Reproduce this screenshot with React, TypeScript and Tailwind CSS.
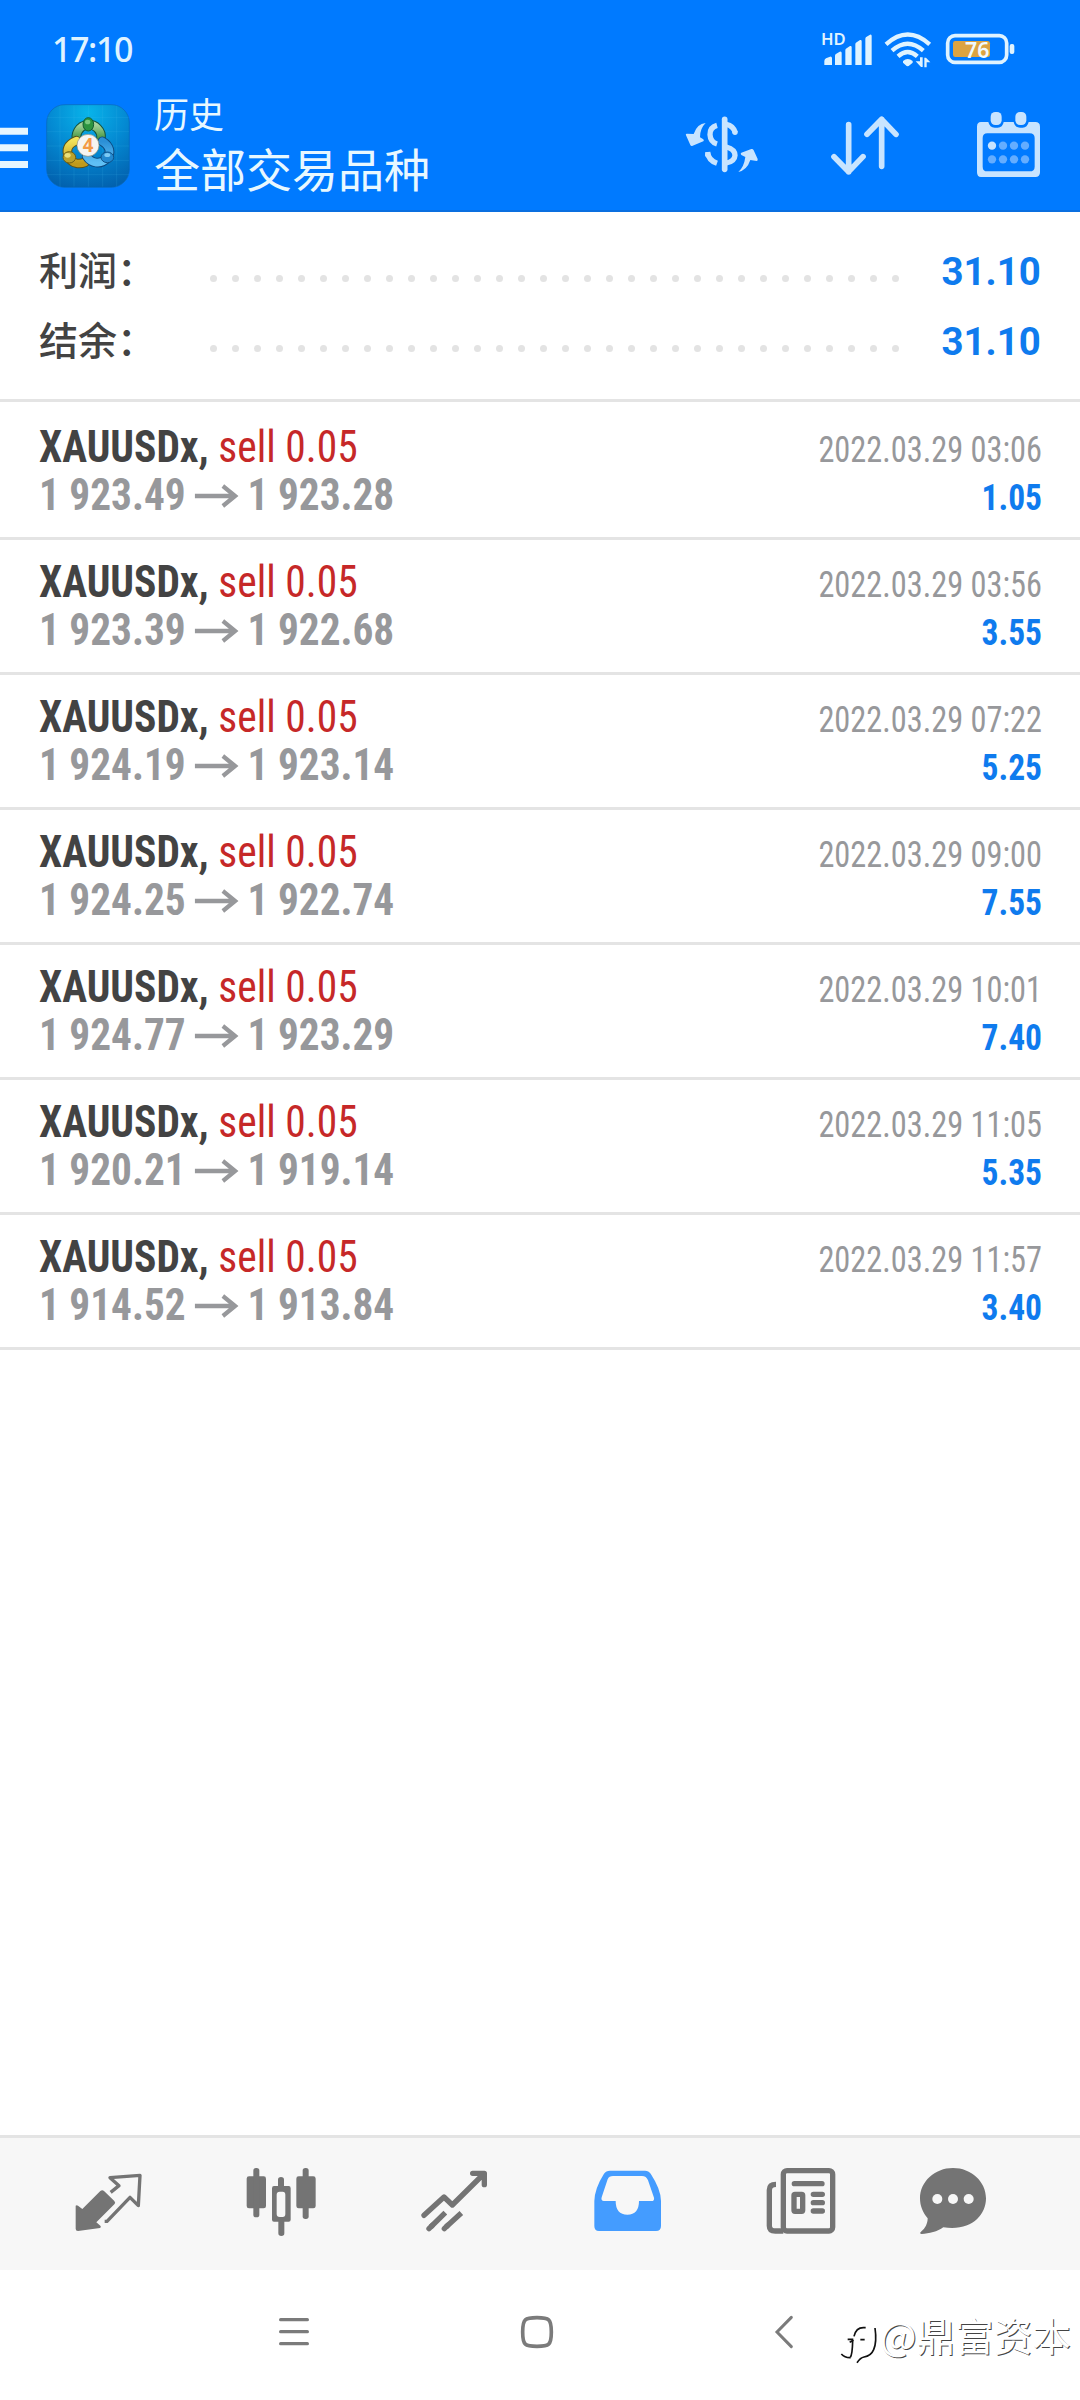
const DEALS = [
  { open: '1 923.49', close: '1 923.28', time: '2022.03.29 03:06', profit: '1.05' },
  { open: '1 923.39', close: '1 922.68', time: '2022.03.29 03:56', profit: '3.55' },
  { open: '1 924.19', close: '1 923.14', time: '2022.03.29 07:22', profit: '5.25' },
  { open: '1 924.25', close: '1 922.74', time: '2022.03.29 09:00', profit: '7.55' },
  { open: '1 924.77', close: '1 923.29', time: '2022.03.29 10:01', profit: '7.40' },
  { open: '1 920.21', close: '1 919.14', time: '2022.03.29 11:05', profit: '5.35' },
  { open: '1 914.52', close: '1 913.84', time: '2022.03.29 11:57', profit: '3.40' },
];

const DOTS = Array.from({ length: 32 }, (_, i) => i);

function StatusBar() {
  return (
    <div className="flex h-[97px] items-start pl-[52px] pr-[64px]">
      <span className="mt-[25px] font-['Noto_Sans'] text-[34px] leading-[48px] font-medium tracking-[-1.4px] text-[#dff3ff]">17:10</span>
      <svg className="mt-[24px] ml-auto" width="54" height="43" viewBox="480 72 162 129" fill="#dff3ff">
        <text x="483" y="136" fontFamily="Noto Sans" fontSize="50" fontWeight="600" textLength="74">HD</text>
        <path d="M493 195v-12q0-5 5-8l12-5q6-1 6 5v20zM525 195v-28q0-4 4-6l10-6q6-2 6 4v36zM556 195v-44q0-4 4-6l10-7q5-1 5 4v53zM586 195v-62q0-4 4-6l10-7q5-1 5 4v71zM616 195v-79q0-4 4-6l10-6q5-2 5 4v87z" />
      </svg>
      <svg className="mt-[30px] ml-[9px]" width="50" height="39" viewBox="669 90 150 117" fill="none" stroke="#dff3ff">
        <path strokeWidth="13" d="M678 133q65-59 131 0M696 152q47-42 94 0M714 169q29-26 58 0" />
        <path fill="#dff3ff" stroke="none" d="M729 183q14-12 29 0v5l-12 10q-3 1-6 0l-11-10zM780 172h8v29h-5l-16-17h13zM793 202v-29h5l13 14h-11v15z" />
      </svg>
      <svg className="mt-[32px] ml-[12px]" width="71" height="34" viewBox="855 96 213 102">
        <rect x="863" y="107" width="177" height="80" rx="22" fill="none" stroke="#dff3ff" strokeWidth="11" />
        <rect x="879" y="123" width="111" height="48" rx="7" fill="#dca341" />
        <rect x="1049" y="132" width="14" height="30" rx="6" fill="#dff3ff" />
        <text x="915" y="173" fontFamily="Noto Sans" fontSize="66" fontWeight="600" fill="#f0faff" textLength="73" lengthAdjust="spacingAndGlyphs">76</text>
      </svg>
    </div>
  );
}

function AppLogo() {
  return (
    <svg className="mt-[7px] ml-[17px]" width="84" height="84" viewBox="138 312 252 252">
      <defs>
        <radialGradient id="tile" cx="50%" cy="10%" r="95%">
          <stop offset="0" stopColor="#08b4ea" />
          <stop offset=".5" stopColor="#0489d2" />
          <stop offset="1" stopColor="#0260ad" />
        </radialGradient>
        <linearGradient id="green" x1="0" y1="0" x2="0" y2="1">
          <stop offset="0" stopColor="#a5d39a" />
          <stop offset="1" stopColor="#2f8a2f" />
        </linearGradient>
        <linearGradient id="yellow" x1="0" y1="0" x2="0" y2="1">
          <stop offset="0" stopColor="#f2e25a" />
          <stop offset="1" stopColor="#c09a1c" />
        </linearGradient>
        <linearGradient id="blue" x1="0" y1="0" x2="0" y2="1">
          <stop offset="0" stopColor="#2b8fd6" />
          <stop offset="1" stopColor="#5fc0f5" />
        </linearGradient>
      </defs>
      <rect x="140" y="314" width="248" height="248" rx="54" fill="url(#tile)" stroke="#0a68b8" strokeWidth="2" />
      <path d="M180 316v244M222 316v244M265 316v244M308 316v244M350 316v244M141 352h246M141 395h246M141 438h246M141 481h246M141 524h246" stroke="#4fc0f0" strokeOpacity=".22" strokeWidth="2" />
      <g fill="none" strokeLinecap="round">
        <path d="M232 425A37 37 0 1 1 303 416" stroke="#15533f" strokeWidth="29" />
        <path d="M232 425A37 37 0 1 1 303 416" stroke="url(#green)" strokeWidth="23" />
        <path d="M229 422C203 433 196 450 207 473C218 491 238 494 255 487" stroke="#59521c" strokeWidth="29" />
        <path d="M229 422C203 433 196 450 207 473C218 491 238 494 255 487" stroke="url(#yellow)" strokeWidth="23" />
        <path d="M307 424C331 438 334 460 321 475C302 496 274 490 260 469" stroke="#0d4a80" strokeWidth="29" />
        <path d="M307 424C331 438 334 460 321 475C302 496 274 490 260 469" stroke="url(#blue)" strokeWidth="23" />
      </g>
      <ellipse cx="265" cy="373" rx="16" ry="20" fill="#2c9440" stroke="#135b30" strokeWidth="3" />
      <ellipse cx="263" cy="366" rx="8" ry="7" fill="#79c77f" />
      <ellipse cx="208" cy="472" rx="19" ry="17" fill="#baa12c" stroke="#6c5e15" strokeWidth="3" />
      <ellipse cx="203" cy="466" rx="9" ry="7" fill="#e9df7a" />
      <ellipse cx="322" cy="472" rx="19" ry="16" fill="#2389d0" stroke="#0e528a" strokeWidth="3" />
      <ellipse cx="322" cy="465" rx="9" ry="6" fill="#7dcaf4" />
      <circle cx="264" cy="436" r="33" fill="#f5f4f2" stroke="#8d8c78" strokeWidth="2" />
      <text x="264" y="457" textAnchor="middle" fontFamily="Open Sans" fontSize="56" fontWeight="700" fill="#f39a45">4</text>
    </svg>
  );
}

function Toolbar() {
  return (
    <div className="flex h-[112px] items-start pr-[39px]">
      <svg className="mt-[29px]" width="29" height="44" viewBox="0 378 87 132" fill="#e6f6ff">
        <path d="M0 383h84v21H0zM0 433h84v21H0zM0 483h84v21H0z" />
      </svg>
      <AppLogo />
      <div className="ml-[24px] font-['Noto_Sans_CJK_SC',sans-serif] text-[#e8f8ff]">
        <p className="-mt-[5px] text-[35px] leading-[42px]">历史</p>
        <p className="mt-[6px] text-[46px] leading-[54px]">全部交易品种</p>
      </div>
      <svg className="mt-[18px] ml-auto" width="76" height="58" viewBox="72 345 228 174" fill="none" stroke="#c8e4ff">
        <path strokeWidth="17" strokeLinecap="round" d="M194 358v150" />
        <path strokeWidth="16" d="M171 376Q149 382 150 404Q151 426 171 432M143 456Q145 481 171 490" />
        <path strokeWidth="16" d="M199 373Q220 377 226 398M199 441Q225 448 225 466Q224 484 199 489" />
        <circle cx="225" cy="397" r="8" fill="#c8e4ff" stroke="none" />
        <circle cx="143" cy="464" r="8" fill="#c8e4ff" stroke="none" />
        <path fill="#c8e4ff" stroke="none" d="M137 369Q111 371 101 402L80 401Q76 401 78 406L91 435Q93 439 98 437L130 424Q133 422 130 418L120 412Q120 385 137 369ZM235 516Q261 510 271 480L290 483Q294 483 293 477L281 451Q279 446 274 447L244 458Q240 460 244 465L256 471Q252 501 235 516Z" />
      </svg>
      <svg className="mt-[18px] ml-[70px]" width="70" height="61" viewBox="510 345 210 183" fill="none" stroke="#c8e4ff" strokeWidth="17" strokeLinecap="round" strokeLinejoin="round">
        <path d="M566 374v141M522 470l44 45 43-45M665 499V358M621 403l44-45 43 45" />
      </svg>
      <svg className="mt-[14px] ml-[76px]" width="65" height="67" viewBox="948 333 195 201">
        <path fill="#c8e4ff" fillRule="evenodd" d="M963 366h22q4 17 19 17h9q15 0 18-17h30q4 17 19 17h8q14 0 18-17h20q14 0 14 14v137q0 14-14 14H963q-12 0-12-14V380q0-14 12-14zM982 400q-14 0-14 14v86q0 14 14 14h127q15 0 15-14v-86q0-14-15-14z" />
        <rect x="992" y="336" width="33" height="39" rx="14" fill="#c8e4ff" />
        <rect x="1066" y="336" width="33" height="39" rx="14" fill="#c8e4ff" />
        <circle cx="996" cy="437" r="12.5" fill="#c8e4ff" />
        <g fill="#64adff">
          <circle cx="1029" cy="437" r="12.5" />
          <circle cx="1062" cy="437" r="12.5" />
          <circle cx="1095" cy="437" r="12.5" />
          <circle cx="996" cy="478" r="12.5" />
          <circle cx="1029" cy="478" r="12.5" />
          <circle cx="1062" cy="478" r="12.5" />
          <circle cx="1095" cy="478" r="12.5" />
        </g>
      </svg>
    </div>
  );
}

function SummaryRow({ label, value }: { label: string; value: string }) {
  return (
    <div className="flex h-[70px] items-start justify-between pr-[39px] pl-[39px]">
      <span className="-mt-[2px] w-[171px] font-['Noto_Sans_CJK_SC',sans-serif] text-[39px] leading-[70px] font-medium text-[#434343]">{label}</span>
      <div className="mt-[40px] flex gap-[15px]">
        {DOTS.map((d) => (
          <i key={d} className="size-[7px] rounded-full bg-[#e3e3e3]" />
        ))}
      </div>
      <span className="mt-[2px] ml-auto origin-right scale-x-[0.985] font-['Roboto'] text-[39px] leading-[70px] font-bold text-[#0f7bee]">{value}</span>
    </div>
  );
}

function DealRow({ deal }: { deal: (typeof DEALS)[number] }) {
  return (
    <div className="h-[135px] border-b-3 border-[#e4e4e4] pt-[18px] pr-[38px] pl-[39px] font-['Roboto'] [font-stretch:75%]">
      <div className="flex h-[48px] items-baseline justify-between leading-[48px]">
        <p className="origin-left scale-x-[0.943] text-[44px] text-[#c62828]">
          <b className="text-[#434343]">XAUUSDx,</b> sell 0.05
        </p>
        <p className="origin-right scale-x-[0.898] text-[36px] text-[#97989b]">{deal.time}</p>
      </div>
      <div className="flex h-[48px] items-baseline justify-between leading-[48px] font-bold">
        <p className="origin-left scale-x-[0.938] text-[44px] text-[#97989b]">
          {deal.open}
          <svg className="mr-[9px] mb-[5px] ml-[10px] inline-block" width="47" height="24" viewBox="0 0 47 24" fill="none" stroke="#97989b" strokeWidth="4.5">
            <path d="M0 12h43M30 2l13 10-13 10" />
          </svg>
          {deal.close}
        </p>
        <p className="origin-right scale-x-[0.93] text-[36px] text-[#0f7bee]">{deal.profit}</p>
      </div>
    </div>
  );
}

function TabBar() {
  return (
    <div className="flex h-[135px] items-start border-t-3 border-[#e4e4e4] bg-[#f7f7f7] pl-[74px]">
      <svg className="mt-[34px]" width="69" height="60" viewBox="102 156 207 180">
        <path fill="#747474" d="M107 257q3-3 7 0l13 10 54-54q6-5 11 0l31 30q5 5 0 10l-54 54 12 10q4 4-1 7l-66 9q-7 0-7-7z" />
        <path fill="none" stroke="#747474" strokeWidth="10" strokeLinejoin="round" d="M212 217l25-20-27-24 90-7-5 91-25-25-69 72h-7" />
      </svg>
      <svg className="mt-[29px] ml-[102px]" width="72" height="70" viewBox="615 141 216 210" fill="#747474">
        <rect x="620" y="169" width="58" height="96" rx="7" />
        <rect x="640" y="144" width="18" height="148" rx="8" />
        <rect x="769" y="169" width="58" height="96" rx="7" />
        <rect x="788" y="144" width="18" height="153" rx="8" />
        <path fillRule="evenodd" d="M714 198v-19q0-8 9-8t9 8v19h14q6 0 6 7v94q0 6-6 6h-13v35q0 8-9 8t-9-8v-35h-13q-6 0-6-6v-94q0-7 6-7zM719 215q-9 0-9 9v58q0 9 9 9h9q8 0 8-9v-58q0-9-8-9z" />
      </svg>
      <svg className="mt-[32px] ml-[103px]" width="68" height="62" viewBox="120 150 204 186" fill="none" stroke="#747474" strokeWidth="16">
        <path strokeLinecap="round" strokeLinejoin="round" d="M132 286l60-55 25 24 91-90M278 160h35v34" />
        <path strokeLinecap="round" d="M147 326l10-10M193 326l10-10" />
        <path d="M152 321l44-43M198 321l46-42" />
      </svg>
      <svg className="mt-[32px] ml-[105px]" width="69" height="62" viewBox="639 150 207 186">
        <path fill="#449cff" fillRule="evenodd" d="M690 152h105q11 0 17 9 31 47 31 82v75q0 15-15 15H657q-14 0-14-15v-75q1-38 29-82 6-9 18-9zM699 168q-12 0-16 10l-18 54q-3 11 7 11h35q0 41 35 41t35-41h37q10 0 8-10l-18-52q-5-13-18-13z" />
      </svg>
      <svg className="mt-[29px] ml-[103px]" width="72" height="68" viewBox="135 141 216 204" fill="none" stroke="#747474" strokeWidth="16">
        <rect x="190" y="152" width="148" height="181" rx="11" />
        <path d="M168 193q-20 0-20 17v107q0 16 18 16h24" />
        <path strokeLinecap="round" d="M223 191h83M280 223h27M280 248h27M280 273h27" />
        <rect x="222" y="223" width="26" height="51" rx="3" />
      </svg>
      <svg className="mt-[29px] ml-[82px]" width="68" height="68" viewBox="597 141 204 204">
        <path fill="#747474" d="M699 144c55 0 99 41 99 91 0 53-47 100-128 87-17 13-43 19-65 20-5 0-6-4-2-7 13-9 20-25 20-40-15-17-23-38-23-60 0-50 44-91 99-91z" />
        <circle cx="652" cy="237" r="15" fill="#f7f7f7" />
        <circle cx="699" cy="237" r="15" fill="#f7f7f7" />
        <circle cx="746" cy="237" r="15" fill="#f7f7f7" />
      </svg>
    </div>
  );
}

function NavBar() {
  return (
    <div className="flex h-[130px] items-start pl-[278px]">
      <svg className="mt-[46px]" width="32" height="31" viewBox="114 138 96 93" stroke="#7b7b7b" strokeWidth="10" strokeLinecap="round">
        <path d="M122 149h80M122 185h80M122 221h80" />
      </svg>
      <svg className="mt-[45px] ml-[210px]" width="34" height="34" viewBox="840 135 102 102" fill="none" stroke="#7b7b7b" strokeWidth="11">
        <path d="M891 143c36 0 43 3 43 43s-7 43-43 43-43-3-43-43 7-43 43-43z" />
      </svg>
      <svg className="mt-[45px] ml-[220px]" width="20" height="34" viewBox="102 135 60 102" fill="none" stroke="#7b7b7b" strokeWidth="9" strokeLinecap="round">
        <path d="M154 142l-43 44 43 44" />
      </svg>
      <svg className="mt-[55px] ml-[46px]" width="38" height="40" viewBox="300 165 114 120" fill="none" stroke="#111">
        <path strokeWidth="5" d="M342 199q6-26 28-26h7M323 208h17M341 211l-12 6M338 214q-1 40-7 48M361 209h13" />
        <path strokeWidth="5" d="M304 252q11 12 28 11M405 174q6 42-4 65-8 19-29 22-11 2-21 17" />
      </svg>
      <span className="mt-[36px] ml-[2px] font-['Noto_Sans_CJK_SC',sans-serif] text-[38.6px] leading-[56px] whitespace-nowrap text-white [text-shadow:1px_1px_0_#444]">@鼎富资本</span>
    </div>
  );
}

export default function App() {
  return (
    <div className="flex h-[2400px] w-[1080px] flex-col overflow-hidden bg-white">
      <header className="h-[212px] border-b-2 border-[#0a6fe0] bg-[#007aff]">
        <StatusBar />
        <Toolbar />
      </header>
      <section className="mb-[3px] h-[190px] border-b-3 border-[#e4e4e4] pt-[23px]">
        <SummaryRow label="利润：" value="31.10" />
        <SummaryRow label="结余：" value="31.10" />
      </section>
      <main className="flex-1">
        {DEALS.map((deal) => (
          <DealRow key={deal.time} deal={deal} />
        ))}
      </main>
      <TabBar />
      <NavBar />
    </div>
  );
}
